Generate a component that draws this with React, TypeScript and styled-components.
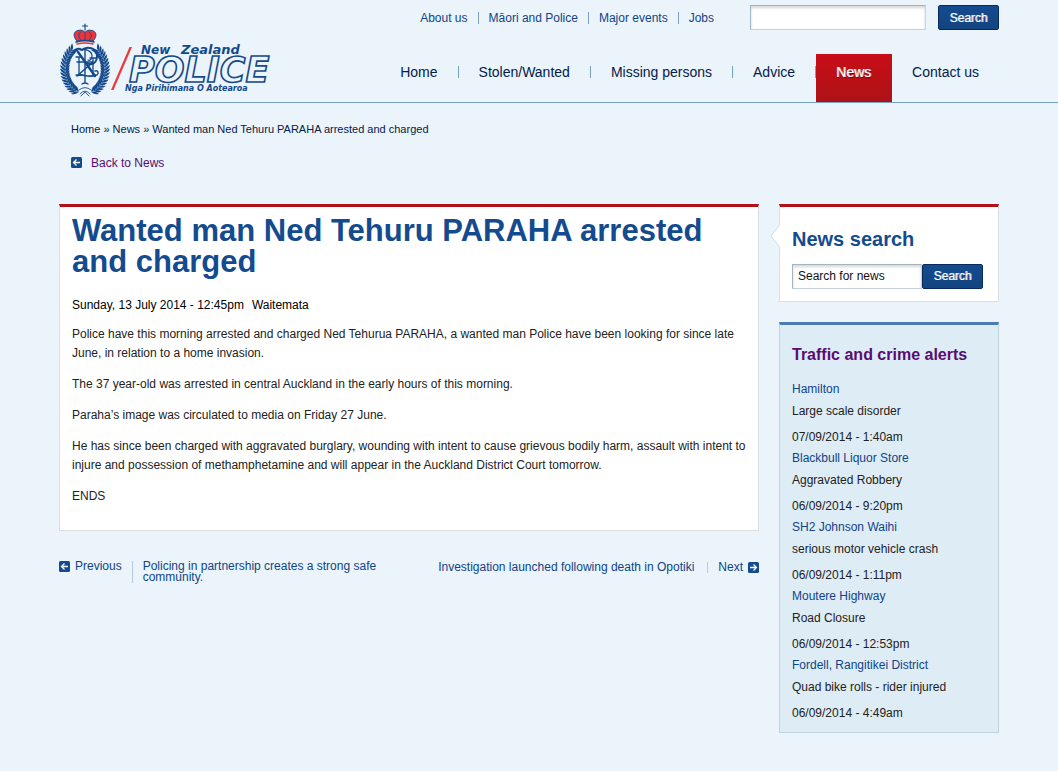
import React from "react";
import styled, { createGlobalStyle, css } from "styled-components";

const color = {
  page: "#ebf4fa",
  blue: "#144b8f",
  link: "#0f4489",
  navy: "#03204a",
  visited: "#5a0b73",
  red: "#b11116",
  rule: "#7ba0c8",
  text: "#222222",
};

const GlobalStyle = createGlobalStyle`
  *, *::before, *::after { box-sizing: border-box; }
  body {
    margin: 0;
    background: ${color.page};
    color: ${color.text};
    font-family: "Liberation Sans", Arial, Helvetica, sans-serif;
    font-size: 12px;
    line-height: 18px;
  }
  h1, h2, p, ul, dl, dd { margin: 0; padding: 0; }
  ul { list-style: none; }
  a { color: ${color.link}; text-decoration: none; }
  a:hover { text-decoration: underline; }
`;

const Container = styled.div`
  max-width: 940px;
  margin: 0 auto;
`;

const Header = styled.header`
  border-bottom: 1px solid ${color.rule};
`;

const HeaderRow = styled(Container)`
  display: flex;
  justify-content: space-between;
`;

const LogoLink = styled.a`
  padding: 22px 0 4px;
  flex: none;
  svg { display: block; }
`;

const HeaderTools = styled.div`
  display: flex;
  flex-direction: column;
  align-items: flex-end;
  justify-content: space-between;
`;

const UtilityBar = styled.div`
  display: flex;
  align-items: center;
  padding-top: 5px;
`;

const UtilityLinks = styled.ul`
  display: flex;
  align-items: center;
  margin-right: 26px;
  line-height: 12px;
  li { padding: 0 10px; }
  li + li { border-left: 1px solid ${color.rule}; }
`;

const SearchForm = styled.form<{ $gap?: number }>`
  display: flex;
  gap: ${(p) => p.$gap ?? 0}px;
`;

const TextField = styled.input<{ $width: number }>`
  width: ${(p) => p.$width}px;
  height: 25px;
  padding: 0 5px 1px;
  border: 1px solid #c3d3da;
  border-color: #a3b5c1 #c9d7dd #c3d3da #a3b5c1;
  border-radius: 0;
  background: #fff;
  box-shadow: inset 0 2px 3px rgba(0, 0, 0, 0.16);
  color: #111;
  font: inherit;
`;

const SearchButton = styled.button`
  width: 61px;
  height: 25px;
  padding: 0;
  border: 1px solid #062b5a;
  border-radius: 2px;
  background: ${color.blue};
  background: linear-gradient(#144b8f, #13447f);
  color: #fff;
  font: inherit;
  text-shadow: 1px 0 0 rgba(255, 255, 255, 0.55);
  cursor: pointer;
`;

const MainNav = styled.ul`
  display: flex;
  font-size: 14px;
`;

const NavItem = styled.li<{ $active?: boolean; $divider?: boolean }>`
  display: flex;
  align-items: center;
  height: 48px;
  padding-bottom: 12px;
  a { padding: 0 20px; color: ${color.navy}; }
  ${(p) =>
    p.$divider &&
    css`
      &::after { content: ""; width: 1px; height: 12px; background: ${color.rule}; }
    `}
  ${(p) =>
    p.$active &&
    css`
      min-width: 76px;
      background: linear-gradient(#c80d17, #ae1218);
      a { color: #fff; text-shadow: 1px 0 0 rgba(255, 255, 255, 0.6), 1px 1px 1px rgba(0, 0, 0, 0.5); }
    `}
`;

const Trail = styled.div`
  padding: 17px 12px 31px;
`;

const Breadcrumb = styled.nav`
  margin-bottom: 16px;
  font-size: 11px;
  color: ${color.navy};
  a { color: ${color.navy}; }
`;

const BackLink = styled.a`
  display: inline-flex;
  align-items: center;
  gap: 9px;
  color: ${color.visited};
  svg { margin-bottom: 2px; }
`;

const Columns = styled.div`
  display: flex;
  align-items: flex-start;
  gap: 20px;
`;

const Main = styled.main`
  flex: 1;
  min-width: 0;
`;

const Article = styled.article`
  padding: 8px 12px 24px;
  border: 1px solid #dcdfe1;
  border-top: 3px solid ${color.red};
  background: #fff;
  line-height: 19px;
  p + p { margin-top: 12px; }
`;

const Title = styled.h1`
  margin-bottom: 19px;
  color: ${color.blue};
  font-size: 31px;
  line-height: 31px;
`;

const Dateline = styled.div`
  display: flex;
  gap: 8px;
  margin-bottom: 10px;
  color: #000;
`;

const Pager = styled.nav`
  display: flex;
  justify-content: space-between;
  align-items: flex-start;
  padding-top: 30px;
  line-height: 11px;
`;

const PagerSide = styled.div<{ $next?: boolean }>`
  display: flex;
  max-width: 330px;
  padding-top: ${(p) => (p.$next ? 1 : 0)}px;
`;

const PagerStep = styled.a`
  display: flex;
  align-items: flex-start;
  gap: 5px;
`;

const PagerTitle = styled.a<{ $next?: boolean }>`
  flex: ${(p) => (p.$next ? "none" : "1")};
  ${(p) =>
    p.$next
      ? css`
          margin-right: 10px;
          padding-right: 13px;
          border-right: 1px solid #b5cbe0;
        `
      : css`
          margin-left: 10px;
          padding-left: 10px;
          border-left: 1px solid #b5cbe0;
        `}
`;

const Sidebar = styled.aside`
  width: 220px;
  display: flex;
  flex-direction: column;
  gap: 20px;
`;

const Panel = styled.section<{ $tone?: "plain" | "alert" }>`
  position: relative;
  padding: 22px 12px 12px;
  border: 1px solid #dcdfe1;
  border-top: 3px solid ${color.red};
  background: #fff;
  ${(p) =>
    p.$tone === "alert" &&
    css`
      padding: 20px 12px 10px;
      border-color: #c0d3df;
      border-top-color: #4c7bb3;
      background: #deecf6;
    `}
`;

const PanelTitle = styled.h2<{ $small?: boolean }>`
  margin-bottom: 15px;
  color: ${(p) => (p.$small ? color.visited : color.blue)};
  font-size: ${(p) => (p.$small ? 16 : 20)}px;
  line-height: 20px;
  a { color: inherit; }
`;

const Pointer = styled.svg`
  position: absolute;
  left: -10px;
  top: 17px;
`;

const AlertItem = styled.li`
  & + & { margin-top: 3px; }
  p { margin-top: 4px; }
  time { display: block; margin-top: 8px; }
`;

function ArrowIcon({ right }: { right?: boolean }) {
  return (
    <svg width="11" height="11" viewBox="0 0 11 11" aria-hidden="true">
      <rect width="11" height="11" rx="1.5" fill={color.blue} />
      <path
        d={right ? "M2 5.5H8.4M5.5 2.5L8.5 5.5L5.5 8.5" : "M9 5.5H2.6M5.5 2.5L2.5 5.5L5.5 8.5"}
        fill="none"
        stroke="#fff"
        strokeWidth="1.300"
      />
    </svg>
  );
}

/* One laurel branch: pairs of leaves following an ellipse around the monogram. */
const leaves = Array.from({ length: 17 }, (_, i) => {
  const t = ((-50 + i * 7.4) * Math.PI) / 180;
  const x = 26 + 20 * Math.cos(t);
  const y = 47 + 24.5 * Math.sin(t);
  const heading = (Math.atan2(-24.5 * Math.cos(t), 20 * Math.sin(t)) * 180) / Math.PI;
  return { x, y, heading };
});

function Branch() {
  return (
    <g fill="#14498c">
      <path d="M35 69A20 24.500 0 0 0 39 28" fill="none" stroke="#14498c" strokeWidth="0.8" />
      {leaves.map((l, i) => (
        <g key={i} transform={`translate(${l.x} ${l.y}) rotate(${l.heading})`}>
          <path d="M-1 0Q2.500 -0.500 5 4.800Q1 4.400 -1 0Z" />
          <path d="M-1 0Q2.500 0.500 5 -4.800Q1 -4.400 -1 0Z" />
        </g>
      ))}
    </g>
  );
}

function Logo() {
  return (
    <svg width="214" height="76" viewBox="0 0 214 76" role="img" aria-label="New Zealand Police">
      <Branch />
      <g transform="translate(52 0) scale(-1 1)">
        <Branch />
      </g>
      <g fill="none" stroke="#14498c" strokeLinecap="round" strokeLinejoin="round">
        <path d="M20 68Q26 63 32 68M21 72Q26 66 31 72M22 74l4-4 4 4" strokeWidth="0.9" />
        {/* crown */}
        <path d="M26 2v6M23.500 4h5" strokeWidth="1.200" />
        <path
          d="M18 19C13 14 15 9 19 8.500C22 7.500 25 8.500 26 10.500C27 8.500 30 7.500 33 8.500C37 9 39 14 34 19Q26 17 18 19Z"
          fill="#ee3338"
          strokeWidth="0.9"
        />
        <path d="M26 10v8M21.500 17.500C18 14 20 10.500 22 10M30.500 17.500C34 14 32 10.500 30 10" strokeWidth="0.9" />
        <path d="M17 20Q26 17.500 35 20" strokeWidth="1.600" />
        <path d="M18 22Q26 20 34 22" stroke="#ee3338" strokeWidth="1.400" />
        {/* interlaced NZP monogram */}
        <path d="M15 31C16 26 20 26 23 28C27 24 39 25 38 35C37 43 31 43 28 41" strokeWidth="2" />
        <path d="M21 28C26 26 33 29 33 34C33 37 31 39 29 38" strokeWidth="1.200" />
        <path d="M19 30L36 54" strokeWidth="2.400" />
        <path d="M20 35V53M34 36V53M17 35H22M31 36H37M17 53H23" strokeWidth="1.300" />
        <path d="M18 40H34L18 54C23 50 28 57 37 53" strokeWidth="1.600" />
        <path d="M26 27V58M23 62Q26 60 29 62M26 58V61M38 53C40 51 39 48 36 49" strokeWidth="1.400" />
      </g>
      <path d="M70.500 25H73L54.500 68H52Z" fill="#ee3a3e" />
      <g fontFamily='"DejaVu Sans", sans-serif' fontWeight="700" fontStyle="italic" fill="#14498c">
        <text x="82" y="32" fontSize="12">New</text>
        <text x="122" y="32" fontSize="13">Zealand</text>
        <text x="70" y="60" fontSize="35" fill={color.page} stroke="#14498c" strokeWidth="1.600">POLICE</text>
        <text x="66" y="69" fontSize="8">Nga Pirihimana O Aotearoa</text>
      </g>
    </svg>
  );
}

const utility = ["About us", "Māori and Police", "Major events", "Jobs"];
const sections = ["Home", "Stolen/Wanted", "Missing persons", "Advice", "News", "Contact us"];
const alerts = [
  { place: "Hamilton", detail: "Large scale disorder", when: "07/09/2014 - 1:40am" },
  { place: "Blackbull Liquor Store", detail: "Aggravated Robbery", when: "06/09/2014 - 9:20pm" },
  { place: "SH2 Johnson Waihi", detail: "serious motor vehicle crash", when: "06/09/2014 - 1:11pm" },
  { place: "Moutere Highway", detail: "Road Closure", when: "06/09/2014 - 12:53pm" },
  { place: "Fordell, Rangitikei District", detail: "Quad bike rolls - rider injured", when: "06/09/2014 - 4:49am" },
];

export default function App() {
  return (
    <>
      <GlobalStyle />
      <Header>
        <HeaderRow>
          <LogoLink href="#"><Logo /></LogoLink>
          <HeaderTools>
            <UtilityBar>
              <UtilityLinks>
                {utility.map((u) => (
                  <li key={u}><a href="#">{u}</a></li>
                ))}
              </UtilityLinks>
              <SearchForm $gap={12} onSubmit={(e) => e.preventDefault()}>
                <TextField $width={176} type="text" aria-label="Search this site" />
                <SearchButton type="submit">Search</SearchButton>
              </SearchForm>
            </UtilityBar>
            <nav>
              <MainNav>
                {sections.map((s, i) => (
                  <NavItem key={s} $active={s === "News"} $divider={i < 4}>
                    <a href="#">{s}</a>
                  </NavItem>
                ))}
              </MainNav>
            </nav>
          </HeaderTools>
        </HeaderRow>
      </Header>
      <Container>
        <Trail>
          <Breadcrumb>
            <a href="#">Home</a> » <a href="#">News</a> » Wanted man Ned Tehuru PARAHA arrested and charged
          </Breadcrumb>
          <BackLink href="#"><ArrowIcon />Back to News</BackLink>
        </Trail>
        <Columns>
          <Main>
            <Article>
              <Title>Wanted man Ned Tehuru PARAHA arrested and charged</Title>
              <Dateline><span>Sunday, 13 July 2014 - 12:45pm</span><span>Waitemata</span></Dateline>
              <p>Police have this morning arrested and charged Ned Tehurua PARAHA, a wanted man Police have been looking for since late June, in relation to a home invasion.</p>
              <p>The 37 year-old was arrested in central Auckland in the early hours of this morning.</p>
              <p>Paraha’s image was circulated to media on Friday 27 June.</p>
              <p>He has since been charged with aggravated burglary, wounding with intent to cause grievous bodily harm, assault with intent to injure and possession of methamphetamine and will appear in the Auckland District Court tomorrow.</p>
              <p>ENDS</p>
            </Article>
            <Pager>
              <PagerSide>
                <PagerStep href="#"><ArrowIcon />Previous</PagerStep>
                <PagerTitle href="#">Policing in partnership creates a strong safe community.</PagerTitle>
              </PagerSide>
              <PagerSide $next>
                <PagerTitle href="#" $next>Investigation launched following death in Opotiki</PagerTitle>
                <PagerStep href="#">Next<ArrowIcon right /></PagerStep>
              </PagerSide>
            </Pager>
          </Main>
          <Sidebar>
            <Panel>
              <Pointer width="10" height="24" viewBox="0 0 10 24" aria-hidden="true">
                <path d="M10 0.500L1 12L10 23.500" fill="#fff" stroke="#d5dade" />
              </Pointer>
              <PanelTitle>News search</PanelTitle>
              <SearchForm onSubmit={(e) => e.preventDefault()}>
                <TextField $width={130} type="text" aria-label="Search for news" defaultValue="Search for news" />
                <SearchButton type="submit">Search</SearchButton>
              </SearchForm>
            </Panel>
            <Panel $tone="alert">
              <PanelTitle $small><a href="#">Traffic and crime alerts</a></PanelTitle>
              <ul>
                {alerts.map((a) => (
                  <AlertItem key={a.place}>
                    <a href="#">{a.place}</a>
                    <p>{a.detail}</p>
                    <time>{a.when}</time>
                  </AlertItem>
                ))}
              </ul>
            </Panel>
          </Sidebar>
        </Columns>
      </Container>
    </>
  );
}
